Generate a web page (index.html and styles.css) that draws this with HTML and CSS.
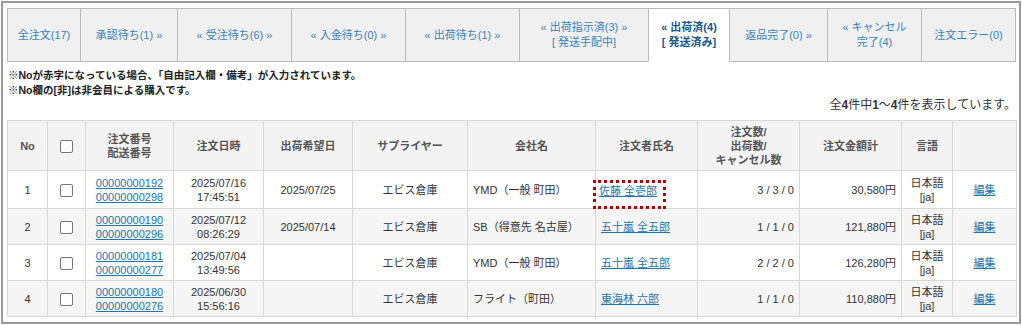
FILE: index.html
```html
<!DOCTYPE html>
<html lang="ja">
<head>
  <meta charset="UTF-8">
  <title>受注一覧</title>
  <link rel="stylesheet" href="styles.css">
</head>
<body>
  <div class="frame">
    <div class="tabs">
      <a class="tab w1">全注文(17)</a>
      <a class="tab w2">承認待ち(1) »</a>
      <a class="tab w3">« 受注待ち(6) »</a>
      <a class="tab w3">« 入金待ち(0) »</a>
      <a class="tab w3">« 出荷待ち(1) »</a>
      <a class="tab w4">« 出荷指示済(3) »<br>[ 発送手配中]</a>
      <a class="tab w5 active">« 出荷済(4)<br>[ 発送済み]</a>
      <a class="tab w6">返品完了(0) »</a>
      <a class="tab w7">« キャンセル<br>完了(4)</a>
      <a class="tab w8">注文エラー(0)</a>
    </div>

    <p class="note">※Noが赤字になっている場合、「自由記入欄・備考」が入力されています。<br>※No欄の[非]は非会員による購入です。</p>
    <p class="count">全<b>4</b>件中<b>1</b>～<b>4</b>件を表示しています。</p>

    <table class="orders">
      <colgroup>
        <col style="width:40px"><col style="width:38px"><col style="width:88px"><col style="width:90px">
        <col style="width:89px"><col style="width:115px"><col style="width:128px"><col style="width:102px">
        <col style="width:102px"><col style="width:102px"><col style="width:51px"><col style="width:64px">
      </colgroup>
      <thead>
        <tr>
          <th>No</th>
          <th><span class="chk"></span></th>
          <th>注文番号<br>配送番号</th>
          <th>注文日時</th>
          <th>出荷希望日</th>
          <th>サプライヤー</th>
          <th>会社名</th>
          <th>注文者氏名</th>
          <th>注文数/<br>出荷数/<br>キャンセル数</th>
          <th>注文金額計</th>
          <th>言語</th>
          <th></th>
        </tr>
      </thead>
      <tbody>
        <tr>
          <td class="c">1</td>
          <td class="c"><span class="chk"></span></td>
          <td class="c"><a>00000000192</a><br><a>00000000298</a></td>
          <td class="c">2025/07/16<br>17:45:51</td>
          <td class="c">2025/07/25</td>
          <td class="c">エビス倉庫</td>
          <td>YMD（一般 町田）</td>
          <td><a class="mark">佐藤 全壱郎</a></td>
          <td class="r">3 / 3 / 0</td>
          <td class="r">30,580円</td>
          <td class="c">日本語<br>[ja]</td>
          <td class="c"><a>編集</a></td>
        </tr>
        <tr>
          <td class="c">2</td>
          <td class="c"><span class="chk"></span></td>
          <td class="c"><a>00000000190</a><br><a>00000000296</a></td>
          <td class="c">2025/07/12<br>08:26:29</td>
          <td class="c">2025/07/14</td>
          <td class="c">エビス倉庫</td>
          <td>SB（得意先 名古屋）</td>
          <td><a>五十嵐 全五郎</a></td>
          <td class="r">1 / 1 / 0</td>
          <td class="r">121,880円</td>
          <td class="c">日本語<br>[ja]</td>
          <td class="c"><a>編集</a></td>
        </tr>
        <tr>
          <td class="c">3</td>
          <td class="c"><span class="chk"></span></td>
          <td class="c"><a>00000000181</a><br><a>00000000277</a></td>
          <td class="c">2025/07/04<br>13:49:56</td>
          <td class="c"></td>
          <td class="c">エビス倉庫</td>
          <td>YMD（一般 町田）</td>
          <td><a>五十嵐 全五郎</a></td>
          <td class="r">2 / 2 / 0</td>
          <td class="r">126,280円</td>
          <td class="c">日本語<br>[ja]</td>
          <td class="c"><a>編集</a></td>
        </tr>
        <tr>
          <td class="c">4</td>
          <td class="c"><span class="chk"></span></td>
          <td class="c"><a>00000000180</a><br><a>00000000276</a></td>
          <td class="c">2025/06/30<br>15:56:16</td>
          <td class="c"></td>
          <td class="c">エビス倉庫</td>
          <td>フライト（町田）</td>
          <td><a>東海林 六郎</a></td>
          <td class="r">1 / 1 / 0</td>
          <td class="r">110,880円</td>
          <td class="c">日本語<br>[ja]</td>
          <td class="c"><a>編集</a></td>
        </tr>
      </tbody>
    </table>
  </div>
</body>
</html>
```

FILE: styles.css
```css
body {
  margin: 0;
  font-family: "Liberation Sans", Arial, "Noto Sans CJK JP", sans-serif;
  font-size: 11px;
  color: #333;
  background: #fff;
}
.frame {
  margin: 1px;
  height: 314px;
  border: 2px solid #9a9a9a;
  padding: 5px 3px 0 4px;
  overflow: hidden;
}
.tabs {
  display: flex;
  height: 53px;
  border-bottom: 1px solid #bbb;
}
.tab {
  display: flex;
  align-items: center;
  justify-content: center;
  text-align: center;
  line-height: 15px;
  box-sizing: border-box;
  height: 54px;
  margin-right: -1px;
  background: #f0f0f0;
  border: 1px solid #bbb;
  color: #3b82b8;
}
.tab:last-child { margin-right: 0; }
.tab.active {
  background: #fff;
  border-bottom-color: #fff;
  color: #17598a;
  font-weight: bold;
  position: relative;
  z-index: 1;
}
.w1 { width: 74px; }
.w2 { width: 98px; }
.w3 { width: 115px; }
.w4 { width: 130px; }
.w5 { width: 82px; }
.w6 { width: 99px; }
.w7 { width: 95px; }
.w8 { width: 95px; }

.note {
  margin: 6px 0 0 1px;
  font-size: 10.5px;
  font-weight: bold;
  line-height: 15px;
  color: #222;
}
.count {
  margin: 0;
  font-size: 12px;
  text-align: right;
  line-height: 15px;
  color: #333;
}

.orders {
  margin-top: 7px;
  border-collapse: collapse;
  table-layout: fixed;
  width: 1009px;
}
.orders th, .orders td {
  border: 1px solid #d8d8d8;
  padding: 0 5px;
  line-height: 14px;
}
.orders th {
  height: 49px;
  background: #f3f3f3;
  color: #555;
  font-weight: bold;
  text-align: center;
}
.orders td { height: 35px; }
.orders tbody tr:first-child td { height: 37px; }
.orders tbody tr:nth-child(even) td { background: #f5f5f5; }
.orders .c { text-align: center; }
.orders .r { text-align: right; }
.orders a {
  color: #2475ab;
  text-decoration: underline;
}
.chk {
  display: inline-block;
  width: 11px;
  height: 11px;
  border: 1px solid #767676;
  border-radius: 2px;
  background: #fff;
  vertical-align: middle;
}
.mark {
  display: inline-block;
  vertical-align: middle;
  padding: 1px 6px 8px 3px;
  margin: 8px 0 -1px -8px;
  border: 3px dotted #b40000;
}
```
